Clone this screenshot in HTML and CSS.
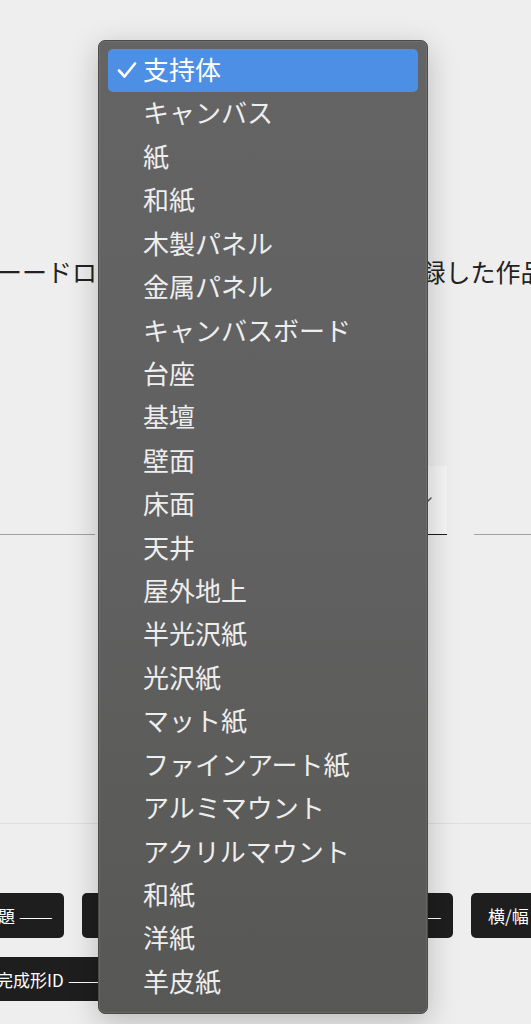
FILE: index.html
```
<!DOCTYPE html>
<html lang="ja">
  <head>
    <meta charset="UTF-8" />
    <meta name="viewport" content="width=device-width, initial-scale=1.0" />
    <title>作品登録</title>
    <link rel="stylesheet" href="styles.css">
  </head>
  <body>
    <main class="page">
      <p class="intro">ーードロップ、またはクリックして登録した作品を選択</p>

      <div class="fields">
        <div class="field field-line"></div>
        <div class="field field-select">
          <span class="select-value">支持体</span>
          <svg class="chevron" width="14" height="8" viewBox="0 0 14 8">
            <path d="M1 1l6 6 6-6" fill="none" stroke="#555" stroke-width="1.5" stroke-linecap="round" stroke-linejoin="round" />
          </svg>
        </div>
        <div class="field field-line"></div>
      </div>

      <section class="tags">
        <div class="tag-row row-one">
          <span class="tag">主題 <span class="dash">—</span></span>
          <span class="tag">作品のタイトル <span class="dash">—</span></span>
          <span class="tag">制作年・年代 <span class="dash">—</span></span>
          <span class="tag">横/幅 <span class="dash">—</span></span>
        </div>
        <div class="tag-row row-two">
          <span class="tag">完成形ID <span class="dash">—</span></span>
          <span class="tag">版 <span class="dash">—</span></span>
        </div>
      </section>
    </main>

    <!-- 開いた状態のセレクトメニュー -->
    <ul class="menu">
      <li class="menu-item selected">
        <svg class="check" width="20" height="16" viewBox="0 0 20 16">
          <path d="M2 8.5l5.5 6L18 1.5" fill="none" stroke="#fff" stroke-width="2.6" stroke-linecap="round" stroke-linejoin="round" />
        </svg>
        支持体
      </li>
      <li class="menu-item">キャンバス</li>
      <li class="menu-item">紙</li>
      <li class="menu-item">和紙</li>
      <li class="menu-item">木製パネル</li>
      <li class="menu-item">金属パネル</li>
      <li class="menu-item">キャンバスボード</li>
      <li class="menu-item">台座</li>
      <li class="menu-item">基壇</li>
      <li class="menu-item">壁面</li>
      <li class="menu-item">床面</li>
      <li class="menu-item">天井</li>
      <li class="menu-item">屋外地上</li>
      <li class="menu-item">半光沢紙</li>
      <li class="menu-item">光沢紙</li>
      <li class="menu-item">マット紙</li>
      <li class="menu-item">ファインアート紙</li>
      <li class="menu-item">アルミマウント</li>
      <li class="menu-item">アクリルマウント</li>
      <li class="menu-item">和紙</li>
      <li class="menu-item">洋紙</li>
      <li class="menu-item">羊皮紙</li>
    </ul>
  </body>
</html>
```

FILE: styles.css
```
body {
  margin: 0;
  padding: 0;
  height: 1024px;
  overflow: hidden;
  background: #eeeeee;
  font-family: "Noto Sans CJK JP", "Noto Sans", sans-serif;
  color: #222;
}
.page {
  padding-top: 254px;
}
.intro {
  margin: 0 0 0 -3px;
  font-size: 25px;
  line-height: 34px;
  white-space: nowrap;
}
/* 入力欄の行 */
.fields {
  display: flex;
  gap: 5px;
  margin-top: 178px;
  height: 69px;
}
.field {
  box-sizing: border-box;
  height: 69px;
}
.field-line {
  width: 95px;
  border-bottom: 1px solid #a2a2a2;
}
.field-line:last-child {
  flex: 1;
  margin-left: 22px;
}
.field-select {
  width: 347px;
  display: flex;
  align-items: center;
  justify-content: space-between;
  padding: 0 15px 0 16px;
  background: #f5f5f5;
  border-bottom: 1px solid #1c1c1c;
  font-size: 18px;
}
.chevron {
  margin-top: 2px;
}
.tags {
  margin-top: 288px;
  border-top: 1px solid #dedede;
  padding-top: 69px;
}
.tag-row {
  display: flex;
  gap: 18px;
  white-space: nowrap;
}
.row-one {
  margin-left: -36px;
}
.row-two {
  margin-left: -21px;
  margin-top: 19px;
}
.tag {
  display: inline-flex;
  align-items: center;
  height: 45px;
  padding: 0 18px 0 17px;
  border-radius: 5px;
  background: #1e1e1e;
  color: #fff;
  font-size: 17px;
}
.row-two .tag {
  height: 44px;
}
/* 値なしの長いダッシュ */
.dash {
  display: inline-block;
  width: 12px;
  margin: 0 16px 0 3px;
  transform: scaleX(2.35);
  transform-origin: left center;
}
/* メニュー本体 */
.menu {
  position: absolute;
  top: 40px;
  left: 98px;
  box-sizing: border-box;
  width: 330px;
  height: 974px;
  margin: 0;
  padding: 8px 9px;
  list-style: none;
  border: 1px solid #4a4a4a;
  border-radius: 7px;
  background: linear-gradient(180deg, #646464 0%, #606060 55%, #575755 100%);
  box-shadow: inset 0 0 0 1px rgba(255, 255, 255, 0.08), 0 8px 30px rgba(0, 0, 0, 0.22);
}
.menu-item {
  position: relative;
  box-sizing: border-box;
  height: 43.43px;
  line-height: 39.43px;
  padding: 0 0 4px 35px;
  border-radius: 5px;
  color: #eeeeee;
  font-size: 26px;
  white-space: nowrap;
}
.selected {
  background: #4e8fe6;
  color: #fff;
}
.check {
  position: absolute;
  left: 9px;
  top: 13px;
}
```
